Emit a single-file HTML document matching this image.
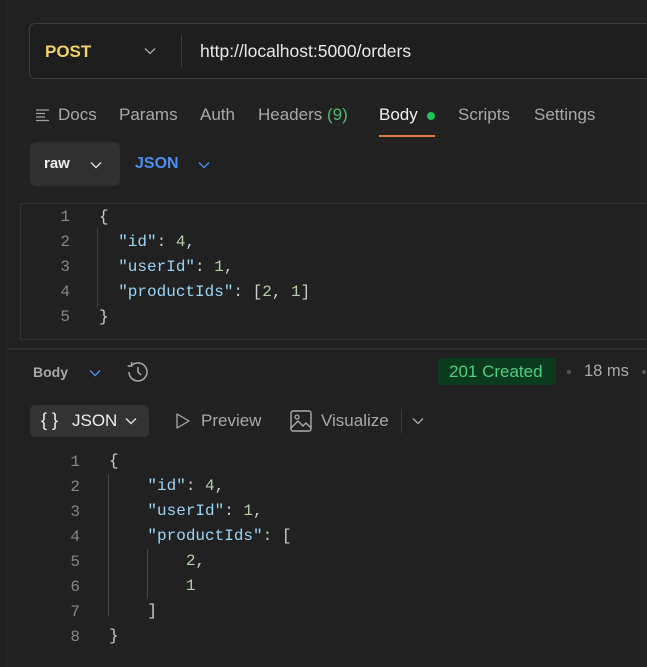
<!DOCTYPE html>
<html><head><meta charset="utf-8"><style>
*{margin:0;padding:0;box-sizing:border-box}
body{width:647px;height:667px;background:#212121;position:relative;overflow:hidden;font-family:"Liberation Sans",sans-serif;color:#cfcfcf}
.a{position:absolute;white-space:pre}
.mono{font-family:"Liberation Mono",monospace;font-size:16px}
.ln{color:#858585;text-align:right;width:30px}
.k{color:#9cd4f5}.n{color:#b5cea8}.p{color:#cccccc}
svg{position:absolute}
.t{font-size:17px;color:#a8a8a8;top:105px}
</style></head><body>
<div class="a" style="left:6px;top:0;width:1px;height:667px;background:#2a2a2a"></div>
<div class="a" style="left:29px;top:23px;width:640px;height:56px;border:1px solid #3d3d3d;border-radius:6px;background:#1e1e1e"></div>
<div class="a" style="left:45px;top:42px;font-size:17px;font-weight:bold;color:#f2d06b">POST</div>
<svg style="left:144px;top:47px" width="12" height="8" viewBox="0 0 12 8"><path d="M1 1.5l5 5 5-5" stroke="#aaa" stroke-width="1.3" fill="none"/></svg>
<div class="a" style="left:181px;top:35px;width:1px;height:33px;background:#3a3a3a"></div>
<div class="a" style="left:200px;top:41px;font-size:17.5px;color:#e8e8e8">http://localhost:5000/orders</div>
<svg style="left:36px;top:109px" width="15" height="13" viewBox="0 0 15 13"><path d="M0 1h13M0 4.5h9M0 8h9M0 11.5h13" stroke="#a0a0a0" stroke-width="1.3"/></svg>
<div class="a t" style="left:58px">Docs</div>
<div class="a t" style="left:119px">Params</div>
<div class="a t" style="left:200px">Auth</div>
<div class="a t" style="left:258px">Headers <span style="color:#52b86e">(9)</span></div>
<div class="a t" style="left:379px;color:#f0f0f0">Body</div>
<div class="a" style="left:427px;top:112px;width:8px;height:8px;border-radius:50%;background:#20c05c"></div>
<div class="a" style="left:379px;top:135px;width:56px;height:2px;background:#d9774a"></div>
<div class="a t" style="left:458px">Scripts</div>
<div class="a t" style="left:534px">Settings</div>
<div class="a" style="left:30px;top:142px;width:90px;height:44px;background:#303030;border-radius:6px"></div>
<div class="a" style="left:44px;top:155px;font-size:15px;font-weight:bold;color:#eee">raw</div>
<svg style="left:90px;top:161px" width="12" height="8" viewBox="0 0 12 8"><path d="M1 1.5l5 5 5-5" stroke="#ddd" stroke-width="1.4" fill="none"/></svg>
<div class="a" style="left:135px;top:155px;font-size:16px;font-weight:bold;color:#4a8ef0">JSON</div>
<svg style="left:198px;top:161px" width="12" height="8" viewBox="0 0 12 8"><path d="M1 1.5l5 5 5-5" stroke="#4a8ef0" stroke-width="1.4" fill="none"/></svg>
<div class="a" style="left:20px;top:203px;width:640px;height:137px;border:1px solid #333;border-right:none"></div>
<div class="a" style="left:97px;top:228px;width:1px;height:80px;background:#404040"></div>
<div class="a mono ln" style="left:40px;top:205px;line-height:25px">1
2
3
4
5</div>
<div class="a mono" style="left:99px;top:205px;line-height:25px"><span class="p">{</span>
  <span class="k">"id"</span><span class="p">: </span><span class="n">4</span><span class="p">,</span>
  <span class="k">"userId"</span><span class="p">: </span><span class="n">1</span><span class="p">,</span>
  <span class="k">"productIds"</span><span class="p">: [</span><span class="n">2</span><span class="p">, </span><span class="n">1</span><span class="p">]</span>
<span class="p">}</span></div>
<div class="a" style="left:8px;top:348px;width:640px;height:2px;background:#2c2c2c"></div>
<div class="a" style="left:33px;top:364px;font-size:14px;font-weight:bold;color:#a8a8a8">Body</div>
<svg style="left:89px;top:369px" width="12" height="8" viewBox="0 0 12 8"><path d="M1 1.5l5 5 5-5" stroke="#4a8ef0" stroke-width="1.4" fill="none"/></svg>
<svg style="left:125px;top:361px" width="24" height="22" viewBox="0 0 24 22"><path d="M4 11a9 9 0 1 0 2.6-6.4" stroke="#aaa" stroke-width="1.5" fill="none"/><path d="M6.6 1v4h-4" stroke="#aaa" stroke-width="1.5" fill="none"/><path d="M13 6v5l3 3" stroke="#aaa" stroke-width="1.5" fill="none"/></svg>
<div class="a" style="left:438px;top:358px;width:118px;height:27px;background:#0c3a1d;border-radius:3px"></div>
<div class="a" style="left:449px;top:362px;font-size:17px;color:#4fd17f">201 Created</div>
<div class="a" style="left:567px;top:370px;width:4px;height:4px;border-radius:50%;background:#555"></div>
<div class="a" style="left:584px;top:362px;font-size:16.5px;color:#a8a8a8">18 ms</div>
<div class="a" style="left:642px;top:370px;width:4px;height:4px;border-radius:50%;background:#555"></div>
<div class="a" style="left:30px;top:405px;width:119px;height:32px;background:#333;border-radius:5px"></div>
<div class="a" style="left:41px;top:410px;font-size:18px;color:#eee">{ }</div>
<div class="a" style="left:72px;top:411px;font-size:17px;color:#eee">JSON</div>
<svg style="left:125px;top:417px" width="12" height="8" viewBox="0 0 12 8"><path d="M1 1.5l5 5 5-5" stroke="#ddd" stroke-width="1.4" fill="none"/></svg>
<svg style="left:175px;top:412px" width="16" height="18" viewBox="0 0 16 18"><path d="M2 2l12 7-12 7z" stroke="#aaa" stroke-width="1.3" fill="none" stroke-linejoin="round"/></svg>
<div class="a" style="left:201px;top:411px;font-size:17px;color:#a8a8a8">Preview</div>
<svg style="left:290px;top:410px" width="22" height="22" viewBox="0 0 22 22"><rect x="1" y="1" width="20" height="20" rx="2" stroke="#aaa" stroke-width="1.4" fill="none"/><circle cx="7" cy="7" r="2" stroke="#aaa" stroke-width="1.3" fill="none"/><path d="M1 18l7-7 5 5 3-3 5 5" stroke="#aaa" stroke-width="1.4" fill="none"/></svg>
<div class="a" style="left:321px;top:411px;font-size:17px;color:#a8a8a8">Visualize</div>
<div class="a" style="left:401px;top:409px;width:1px;height:24px;background:#3a3a3a"></div>
<svg style="left:412px;top:417px" width="12" height="8" viewBox="0 0 12 8"><path d="M1 1.5l5 5 5-5" stroke="#aaa" stroke-width="1.3" fill="none"/></svg>
<div class="a" style="left:108px;top:474px;width:1px;height:142px;background:#444"></div>
<div class="a" style="left:147px;top:549px;width:1px;height:50px;background:#444"></div>
<div class="a mono ln" style="left:50px;top:450px;line-height:25px">1
2
3
4
5
6
7
8</div>
<div class="a mono" style="left:109px;top:449px;line-height:25px"><span class="p">{</span>
    <span class="k">"id"</span><span class="p">: </span><span class="n">4</span><span class="p">,</span>
    <span class="k">"userId"</span><span class="p">: </span><span class="n">1</span><span class="p">,</span>
    <span class="k">"productIds"</span><span class="p">: [</span>
        <span class="n">2</span><span class="p">,</span>
        <span class="n">1</span>
    <span class="p">]</span>
<span class="p">}</span></div>
</body></html>
